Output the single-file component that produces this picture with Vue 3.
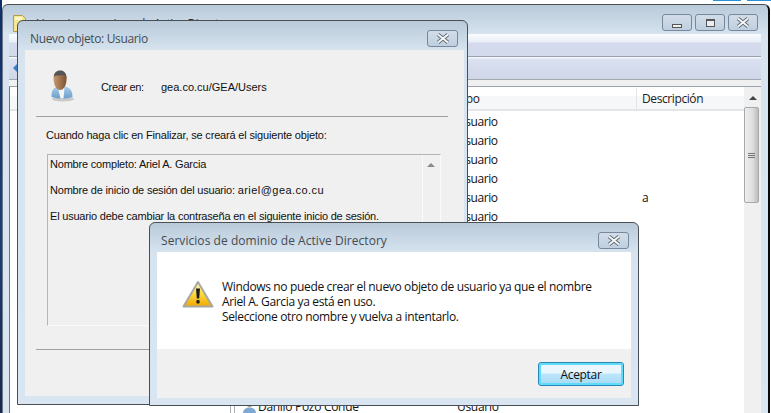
<script setup>
const rows = [122, 141, 160, 179, 198, 217]
</script>

<template>
  <div class="desk">
    <i class="strip"></i>
    <i class="chip chip-a"></i>
    <i class="chip chip-b"></i>
    <section class="win main">
      <div class="main-title">
        <svg class="mmc" width="15" height="18" viewBox="0 0 15 18"><path d="M.5.5h9l3 3v13h-12z" fill="#f6e594" stroke="#b79c45"/><rect x="2" y="2" width="7" height="3" fill="#fff8cf"/></svg>
        <span>Usuarios y equipos de Active Directory</span>
        <div class="caps">
          <button class="cap"><i class="min"></i></button>
          <button class="cap"><i class="max"></i></button>
          <button class="cap">
            <svg width="16" height="11" viewBox="0 0 16 11"><path d="M3 1.5 13 9.5M13 1.5 3 9.5" stroke="#5b6570" stroke-width="3.6"/><path d="M3 1.5 13 9.5M13 1.5 3 9.5" stroke="#f5f7f9" stroke-width="2"/></svg>
          </button>
        </div>
      </div>
      <div class="menu-bar"></div>
      <div class="tool-bar"><i class="back"></i></div>
      <div class="list-area">
        <div class="list">
          <div class="col-head">
            <span class="col-tipo">Tipo</span>
            <span class="col-desc">Descripción</span>
          </div>
          <div class="row" v-for="(y, i) in rows" :key="y">
            <span class="cell-tipo">Usuario</span>
            <span class="cell-desc">{{ i === 4 ? 'a' : '' }}</span>
          </div>
          <i class="tree tree-a"></i>
          <i class="tree tree-b"></i>
          <div class="last-row">
            <svg width="15" height="15" viewBox="0 0 15 15"><circle cx="7.5" cy="5" r="3" fill="#a98a6c"/><path d="M1 15c0-5 3-6.5 6.5-6.5S14 10 14 15z" fill="#7fa9d4"/></svg>
            <span class="last-name">Danilo Pozo Conde</span>
            <span class="last-type">Usuario</span>
          </div>
        </div>
        <div class="vscroll">
          <i class="up"></i>
          <div class="thumb"><i></i><i></i><i></i></div>
        </div>
      </div>
    </section>

    <section class="win dlg-new">
      <header class="dlg-head new-head">
        <span>Nuevo objeto: Usuario</span>
        <button class="x">
          <svg width="16" height="11" viewBox="0 0 16 11"><path d="M3 1.5 13 9.5M13 1.5 3 9.5" stroke="#5b6570" stroke-width="3.6"/><path d="M3 1.5 13 9.5M13 1.5 3 9.5" stroke="#f5f7f9" stroke-width="2"/></svg>
        </button>
      </header>
      <div class="dlg-body">
        <div class="create">
          <svg class="user" width="25" height="32" viewBox="0 0 25 32">
            <defs>
              <linearGradient id="skin" x1="0" y1="0" x2="1" y2="0">
                <stop offset="0" stop-color="#c79a72"/>
                <stop offset="1" stop-color="#7d5232"/>
              </linearGradient>
              <linearGradient id="shirt" x1="0" y1="0" x2="0" y2="1">
                <stop offset="0" stop-color="#a9cfee"/>
                <stop offset="1" stop-color="#6a9cc9"/>
              </linearGradient>
            </defs>
            <ellipse cx="13" cy="29" rx="11" ry="2.5" fill="#aaa" opacity=".55"/>
            <path d="M1.5 27c0-6 1.5-9 6-10.5l4 2 4-2c5 1.5 7 4.500 7 10.500q-10 3.500-21 0z" fill="url(#shirt)"/>
            <path d="M8 17.500l2.500 11h3l1-11-3 1.500z" fill="#f4f6f8"/>
            <path d="M3.500 8c0-5 3-7 6.500-7s6.500 2 6.500 8-2.500 11-6.500 11S3.500 14 3.500 8z" fill="url(#skin)"/>
            <path d="M4 7C4 2 7 .5 10.500.5S17 3 16.500 10c-.5-3-1-4.500-2.500-5-3 .5-6 .5-8 .5-1 .5-1.500 1-2 1.500z" fill="#55565a"/>
          </svg>
          <span class="lbl">Crear en:</span>
          <span class="path">gea.co.cu/GEA/Users</span>
        </div>
        <hr class="sep" />
        <p class="intro">Cuando haga clic en Finalizar, se creará el siguiente objeto:</p>
        <div class="summary">
          <p>Nombre completo: Ariel A. Garcia</p>
          <p>Nombre de inicio de sesión del usuario: <span class="mail">ariel@gea.co.cu</span></p>
          <p>El usuario debe cambiar la contraseña en el siguiente inicio de sesión.</p>
          <div class="sum-scroll"><i></i></div>
        </div>
        <hr class="sep sep2" />
      </div>
    </section>

    <section class="win dlg-alert">
      <header class="dlg-head alert-head">
        <span>Servicios de dominio de Active Directory</span>
        <button class="x">
          <svg width="16" height="11" viewBox="0 0 16 11"><path d="M3 1.5 13 9.5M13 1.5 3 9.5" stroke="#5b6570" stroke-width="3.6"/><path d="M3 1.5 13 9.5M13 1.5 3 9.5" stroke="#f5f7f9" stroke-width="2"/></svg>
        </button>
      </header>
      <div class="alert-msg">
        <svg class="warn" width="32" height="29" viewBox="0 0 32 29">
          <defs>
            <linearGradient id="wg" x1="0" y1="0" x2="0" y2="1">
              <stop offset="0" stop-color="#fffbd0"/>
              <stop offset=".4" stop-color="#fde04a"/>
              <stop offset="1" stop-color="#f2a900"/>
            </linearGradient>
          </defs>
          <path d="M16 2 30.500 26.500H1.500z" fill="url(#wg)" stroke="#a8a8a2" stroke-width="2" stroke-linejoin="round"/>
          <path d="M14 8.500h4l-.8 10h-2.400z" fill="#1c1c1c"/>
          <rect x="14.400" y="20" width="3.200" height="3.500" rx="1" fill="#1c1c1c"/>
        </svg>
        <div class="msg">
          <div>Windows no puede crear el nuevo objeto de usuario ya que el nombre</div>
          <div>Ariel A. Garcia ya está en uso.</div>
          <div>Seleccione otro nombre y vuelva a intentarlo.</div>
        </div>
      </div>
      <footer class="alert-foot">
        <button class="ok">Aceptar</button>
      </footer>
    </section>
  </div>
</template>

<style>
html, body { margin: 0; background: #fff; overflow: hidden; }
</style>

<style scoped>
.desk {
  position: relative;
  width: 771px;
  height: 413px;
  overflow: hidden;
  background: #fff;
  font-family: "Liberation Sans", Arial, sans-serif;
}
.strip { position: absolute; left: 0; top: 0; width: 2px; height: 413px; background: linear-gradient(#0f2f6b, #1b3f7c 55%, #16294d); }
.chip { position: absolute; top: 0; height: 1px; background: #2b8fd8; }
.chip-a { left: 713px; width: 28px; }
.chip-b { left: 747px; width: 24px; }
.win {
  position: absolute;
  box-sizing: border-box;
  border: 1px solid #4a4f55;
  border-radius: 6px 6px 0 0;
  background: linear-gradient(#b9cad9, #d7e4f0 30px, #d9e6f2);
}
.main {
  left: 2px;
  top: 4px;
  width: 768px;
  height: 420px;
  padding: 0 7px 0 6px;
  border-right: 2px solid #0a0a0a;
  border-left-color: #6c7682;
}
.main-title {
  height: 29px;
  display: flex;
  align-items: center;
  position: relative;
  box-sizing: border-box;
  padding-top: 8px;
  font: 12px "Open Sans", sans-serif;
  letter-spacing: -.4px;
  color: #333;
}
.mmc { margin: 0 8px 0 4px; }
.caps { position: absolute; right: 3px; top: 9px; display: flex; gap: 3px; }
.cap {
  width: 30px; height: 17px; padding: 0; box-sizing: border-box;
  border: 1px solid #76889c; border-radius: 3px;
  background: linear-gradient(#d2dde8, #bfcfdf);
  display: flex; align-items: center; justify-content: center;
}
.min { width: 10px; height: 4px; border: 1px solid #555; background: #eee; box-sizing: border-box; margin-top: 6px; }
.max { width: 9px; height: 8px; border: 1px solid #555; border-top-width: 2px; box-sizing: border-box; background: #e8edf2; }
.menu-bar { height: 23px; background: linear-gradient(#fafcfe, #e9eef7 8px, #d3daeb 9px, #d3daeb 22px, #9aa3ad 22px); }
.tool-bar { height: 23px; position: relative; background: linear-gradient(#f4f6fb 0 1px, #dbe1f0 2px, #ced6e8 22px, #a3a9b0 22px); }
.back { position: absolute; left: 4px; top: 7px; border: 4px solid transparent; border-left: 0; border-right: 4px solid #3d7fc4; }
.list-area { display: flex; height: 340px; padding-top: 6px; background: #f0f0f0; }
.list { flex: 1; position: relative; background: #fff; border: 1px solid #9aa3ad; border-right: 0; border-left-color: #6c7682; }
.col-head {
  display: flex;
  box-sizing: border-box;
  height: 24px;
  margin-bottom: 1px;
  padding-top: 1px;
  align-items: center;
  border-bottom: 2px solid #e4e5e7;
  background: linear-gradient(#fff 40%, #f6f7f9 40%);
  font: 12px "Open Sans", sans-serif;
  letter-spacing: -.4px;
  color: #222;
}
.col-tipo { margin-left: 447px; width: 180px; }
.col-desc { margin-left: -1px; padding-left: 5px; border-left: 1px solid #e4e5e7; height: 100%; display: flex; align-items: center; }
.row { height: 19px; display: flex; align-items: center; font: 12px "Open Sans", sans-serif; letter-spacing: -.45px; color: #111; }
.cell-tipo { margin-left: 447px; width: 185px; }
.tree { position: absolute; top: 300px; width: 1px; height: 40px; background: #a9adb2; }
.tree-a { left: 220px; }
.tree-b { left: 224px; }
.last-row {
  position: absolute;
  left: 232px;
  top: 311px;
  display: flex;
  align-items: center;
  height: 16px;
  font: 12px "Open Sans", sans-serif;
  letter-spacing: -.3px;
  color: #111;
}
.last-name { margin-left: 1px; width: 199px; }
.vscroll { width: 17px; background: #f0f0f0; position: relative; border-top: 1px solid #9aa3ad; }
.up { position: absolute; left: 5px; top: 9px; border: 4px solid transparent; border-top: 0; border-bottom: 4px solid #444; }
.thumb {
  position: absolute; left: 0; top: 20px; width: 15px; height: 96px; box-sizing: border-box;
  border: 1px solid #a7a9ab; border-radius: 2px;
  background: linear-gradient(90deg, #eee, #ddd 60%, #bbb);
  display: flex; flex-direction: column; align-items: center; justify-content: center; gap: 1px;
}
.thumb i { width: 7px; height: 1px; background: #777; }

.dlg-new { left: 17px; top: 20px; width: 451px; height: 385px; padding: 0 3px 8px 7px; display: flex; flex-direction: column; }
.dlg-head {
  height: 29px;
  flex: none;
  position: relative;
  box-sizing: border-box;
  display: flex;
  align-items: center;
  font: 12px "Open Sans", sans-serif;
  color: #454b52;
}
.new-head { padding: 6px 0 0 5px; letter-spacing: -.35px; }
.x {
  position: absolute; right: 6px; top: 9px; width: 31px; height: 17px; padding: 0;
  box-sizing: border-box;
  border: 1px solid #76889c; border-radius: 3px;
  background: linear-gradient(#d2dde8, #bfcfdf);
  display: flex; align-items: center; justify-content: center;
}
.dlg-body { flex: 1; background: #f0f0f0; position: relative; font-size: 11px; color: #111; }
.create { height: 66px; display: flex; align-items: center; position: relative; }
.user { margin: 6px 0 0 25px; }
.lbl { margin-left: 26px; width: 60px; margin-top: 8px; letter-spacing: -.35px; }
.path { margin-top: 8px; }
.sep { margin: 0 16px 0 11px; border: 0; border-top: 1px solid #a0a0a0; height: 0; }
.intro { margin: 12px 0 0 21px; letter-spacing: -.17px; }
.summary {
  position: relative; box-sizing: border-box;
  margin: 13px 0 0 22px; width: 394px; height: 172px;
  border: 1px solid #b5b5b5; border-right-color: #fafafa; border-bottom-color: #fafafa;
  padding: 3px 2px;
  letter-spacing: -.2px;
}
.summary p { margin: 0 0 13px; line-height: 13px; }
.mail { letter-spacing: .45px; }
.sum-scroll { position: absolute; right: 0; top: 0; bottom: 0; width: 17px; border-left: 1px solid #fafafa; }
.sum-scroll i { position: absolute; left: 4px; top: 8px; border: 4px solid transparent; border-top: 0; border-bottom: 4px solid #8a8a8a; }
.sep2 { margin-top: 23px; }
.dlg-alert { left: 149px; top: 222px; width: 490px; height: 184px; padding: 0 7px 7px; display: flex; flex-direction: column; }
.alert-head { padding: 5px 0 0 4px; letter-spacing: .05px; }
.alert-head .x { right: 2px; }
.alert-msg { height: 97px; background: #fff; display: flex; }
.warn { margin: 28px 0 0 25px; filter: blur(.2px); }
.msg { margin: 27px 0 0 8px; font: 12px/15px "Open Sans", sans-serif; letter-spacing: -.35px; color: #111; }
.alert-foot { flex: 1; background: #f0f0f0; display: flex; justify-content: flex-end; align-items: flex-start; padding: 13px 7px 0 0; }
.ok {
  width: 86px; height: 24px; padding: 0; box-sizing: border-box;
  border: 1px solid #2a87b5; border-radius: 3px;
  box-shadow: inset 0 0 0 2px #5fdcfb;
  background: linear-gradient(#eaf6fd 0 45%, #bde6fd 50%, #a6d9f4);
  font: 12px "Open Sans", sans-serif;
  letter-spacing: -.3px;
  color: #111;
}
</style>
